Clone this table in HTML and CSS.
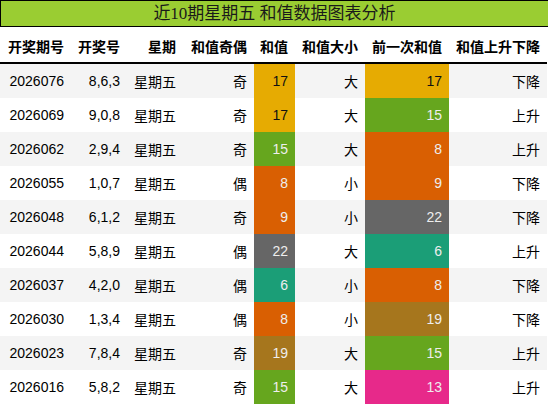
FILE: index.html
```html
<!DOCTYPE html>
<html lang="zh-CN">
<head>
  <meta charset="UTF-8">
  <title>近10期星期五 和值数据图表分析</title>
  <link rel="stylesheet" href="styles.css">
</head>
<body>
  <div class="title">近10期星期五 和值数据图表分析</div>
  <table class="sum-table">
    <colgroup>
      <col class="c-issue">
      <col class="c-nums">
      <col class="c-week">
      <col class="c-parity">
      <col class="c-sum">
      <col class="c-size">
      <col class="c-prev">
      <col class="c-trend">
    </colgroup>
    <thead>
      <tr>
        <th>开奖期号</th>
        <th>开奖号</th>
        <th>星期</th>
        <th>和值奇偶</th>
        <th>和值</th>
        <th>和值大小</th>
        <th>前一次和值</th>
        <th>和值上升下降</th>
      </tr>
    </thead>
    <tbody>
      <tr>
        <td>2026076</td><td>8,6,3</td><td>星期五</td><td>奇</td>
        <td class="v17">17</td><td>大</td><td class="v17">17</td><td>下降</td>
      </tr>
      <tr>
        <td>2026069</td><td>9,0,8</td><td>星期五</td><td>奇</td>
        <td class="v17">17</td><td>大</td><td class="v15">15</td><td>上升</td>
      </tr>
      <tr>
        <td>2026062</td><td>2,9,4</td><td>星期五</td><td>奇</td>
        <td class="v15">15</td><td>大</td><td class="v8">8</td><td>上升</td>
      </tr>
      <tr>
        <td>2026055</td><td>1,0,7</td><td>星期五</td><td>偶</td>
        <td class="v8">8</td><td>小</td><td class="v9">9</td><td>下降</td>
      </tr>
      <tr>
        <td>2026048</td><td>6,1,2</td><td>星期五</td><td>奇</td>
        <td class="v9">9</td><td>小</td><td class="v22">22</td><td>下降</td>
      </tr>
      <tr>
        <td>2026044</td><td>5,8,9</td><td>星期五</td><td>偶</td>
        <td class="v22">22</td><td>大</td><td class="v6">6</td><td>上升</td>
      </tr>
      <tr>
        <td>2026037</td><td>4,2,0</td><td>星期五</td><td>偶</td>
        <td class="v6">6</td><td>小</td><td class="v8">8</td><td>下降</td>
      </tr>
      <tr>
        <td>2026030</td><td>1,3,4</td><td>星期五</td><td>偶</td>
        <td class="v8">8</td><td>小</td><td class="v19">19</td><td>下降</td>
      </tr>
      <tr>
        <td>2026023</td><td>7,8,4</td><td>星期五</td><td>奇</td>
        <td class="v19">19</td><td>大</td><td class="v15">15</td><td>上升</td>
      </tr>
      <tr>
        <td>2026016</td><td>5,8,2</td><td>星期五</td><td>奇</td>
        <td class="v15">15</td><td>大</td><td class="v13">13</td><td>上升</td>
      </tr>
    </tbody>
  </table>
</body>
</html>
```

FILE: styles.css
```css
body {
  margin: 0;
  font-family: "Liberation Sans", "Noto Sans CJK SC", sans-serif;
  font-size: 14px;
  color: #000;
  background-color: #fff;
}
.title {
  height: 25px;
  line-height: 25px;
  border: 1px solid #000;
  border-right: none;
  background-color: #9acd32;
  color: #1a1a1a;
  text-align: center;
  font-family: "Liberation Serif", "Noto Sans CJK SC", serif;
  font-size: 17px;
}
.sum-table {
  width: 547px;
  border-collapse: collapse;
  table-layout: fixed;
}
.c-issue { width: 71px; }
.c-nums { width: 56px; }
.c-week { width: 56px; }
.c-parity { width: 71px; }
.c-sum { width: 41px; }
.c-size { width: 70px; }
.c-prev { width: 84px; }
.c-trend { width: 98px; }
th, td {
  padding: 0 7px 0 0;
  text-align: right;
  white-space: nowrap;
}
th {
  height: 33px;
  padding-top: 2px;
  font-weight: bold;
  border-bottom: 2px solid #000;
}
td {
  height: 34px;
}
tbody tr:nth-child(odd) {
  background-color: #f4f4f4;
}
.v6 { background-color: #1b9e77; color: #eee; }
.v8, .v9 { background-color: #d95f02; color: #eee; }
.v13 { background-color: #e7298a; color: #eee; }
.v15 { background-color: #66a61e; color: #eee; }
.v17 { background-color: #e6ab02; color: #111; }
.v19 { background-color: #a6761d; color: #eee; }
.v22 { background-color: #666666; color: #eee; }
```
